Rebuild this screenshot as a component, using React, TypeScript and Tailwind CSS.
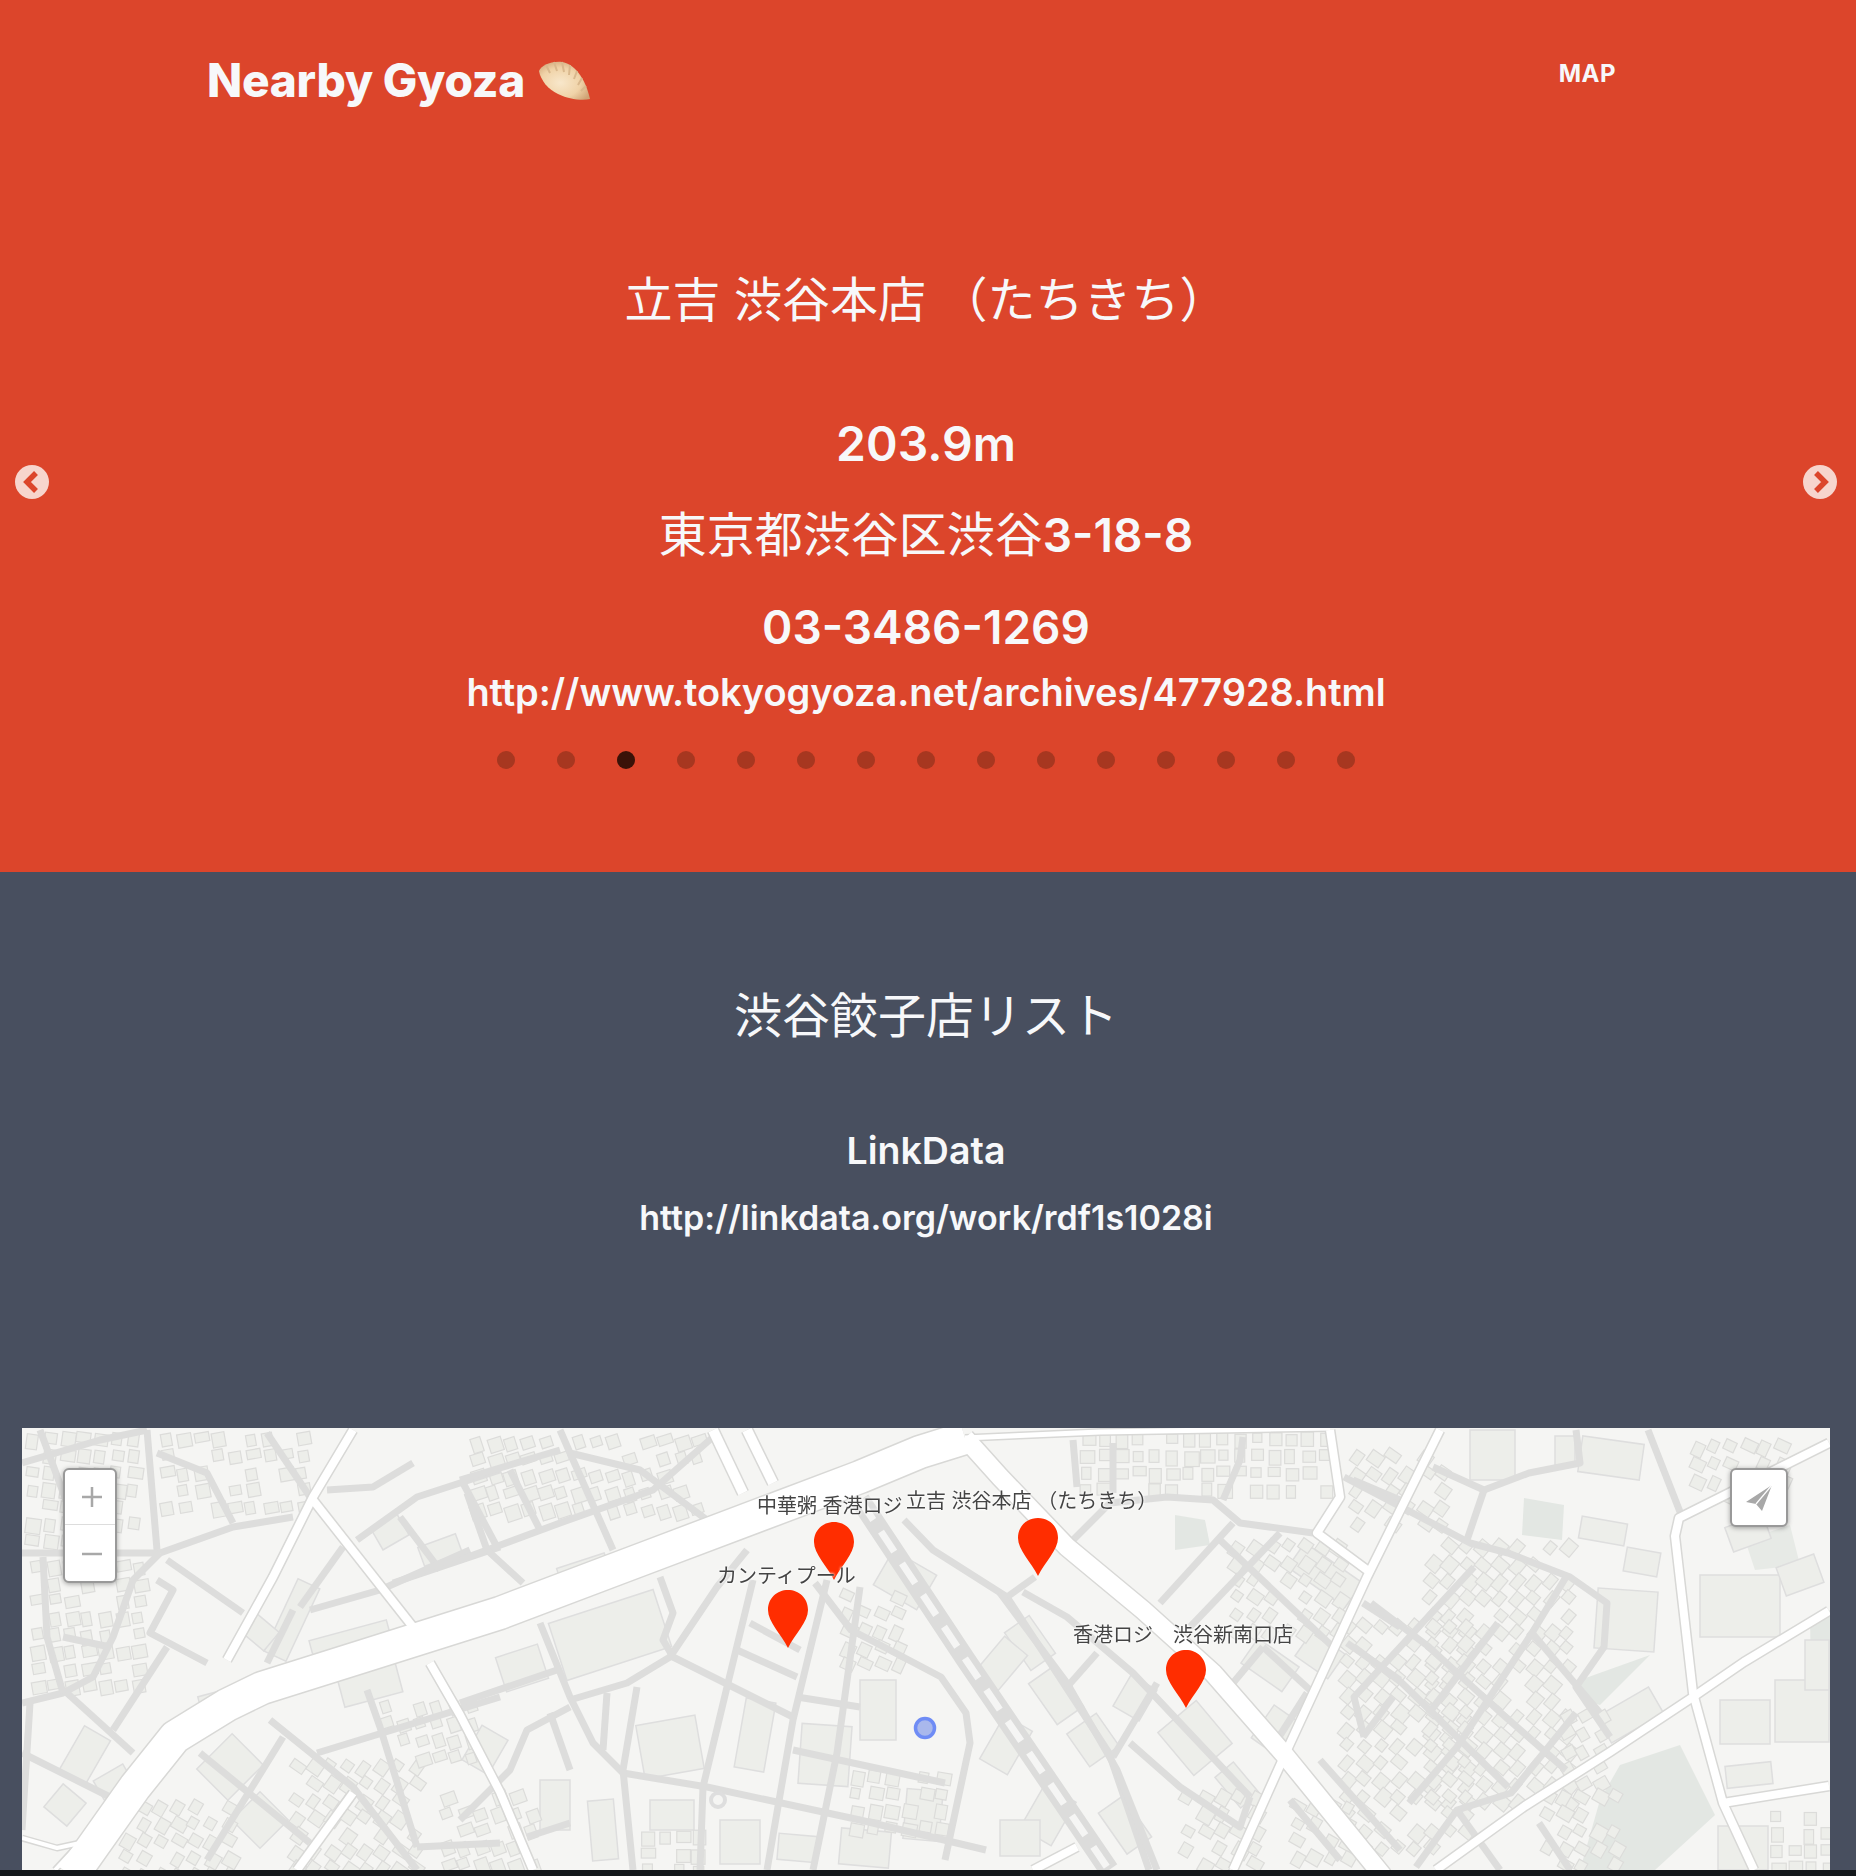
const roadsWhite: [string, number][] = [
  ["M72 1876 L135 1787 L175 1737 L227 1705 L262 1688 L367 1655 L500 1613 L640 1560 L860 1477 L920 1452 L965 1438", 32],
  ["M965 1438 L1100 1432 L1330 1428", 5],
  ["M965 1438 L1000 1477 L1067 1547 L1143 1610 L1213 1673 L1283 1753 L1383 1876", 18],
  ["M353 1430 L313 1497 L273 1577 L227 1660", 8],
  ["M313 1500 L413 1627", 8],
  ["M430 1663 L460 1715 L500 1792 L533 1870", 8],
  ["M353 1793 L297 1870", 8],
  ["M713 1430 L743 1493", 10],
  ["M747 1430 L773 1483", 10],
  ["M22 1838 L57 1848 L80 1843 L55 1870", 4],
  ["M1330 1430 L1340 1497 L1317 1533 L1367 1570", 8],
  ["M1440 1430 L1367 1577 L1287 1750 L1233 1870", 8],
  ["M1033 1870 L1077 1847", 8],
  ["M1829 1443 L1679 1518 L1675 1536 L1693 1693 L1723 1803 L1754 1870", 8],
  ["M1829 1611 L1744 1662 L1693 1697 L1610 1752 L1525 1806 L1436 1870", 8],
  ["M1723 1803 L1829 1786", 8],
];

const roadsGray: string[] = [
  "M22 1463 L100 1440 L147 1430",
  "M40 1430 L67 1503 L80 1550",
  "M147 1430 L157 1550",
  "M157 1453 L207 1473 L233 1523",
  "M267 1433 L310 1497",
  "M160 1553 L233 1527 L293 1517",
  "M22 1553 L160 1553",
  "M327 1490 L373 1487 L413 1463",
  "M357 1540 L417 1497 L500 1470",
  "M400 1517 L440 1570",
  "M393 1583 L500 1547",
  "M463 1483 L497 1547",
  "M160 1553 L133 1580 L113 1637 L93 1677 L63 1693 L22 1703",
  "M43 1557 L47 1637 L63 1693",
  "M157 1580 L173 1590 L150 1633 L207 1663",
  "M167 1560 L243 1613",
  "M293 1610 L267 1663",
  "M310 1610 L380 1590 L470 1550",
  "M343 1547 L300 1607",
  "M63 1637 L110 1647",
  "M167 1647 L113 1730",
  "M67 1693 L133 1753",
  "M22 1753 L110 1797",
  "M30 1703 L22 1830",
  "M270 1720 L353 1787 L417 1870",
  "M317 1753 L500 1697",
  "M283 1737 L207 1860",
  "M200 1753 L310 1843",
  "M367 1690 L380 1727 L417 1847",
  "M417 1847 L500 1843",
  "M460 1480 L560 1450",
  "M560 1430 L570 1453 L640 1470 L707 1520",
  "M570 1453 L613 1550",
  "M510 1470 L540 1530",
  "M460 1560 L560 1523 L653 1490 L713 1437",
  "M467 1493 L487 1550 L523 1583",
  "M540 1623 L570 1697 L593 1743 L623 1773 L707 1787 L860 1820 L986 1850",
  "M460 1703 L557 1670",
  "M570 1700 L627 1683 L670 1657 L717 1587 L747 1550",
  "M660 1577 L673 1613 L663 1640 L673 1657 L793 1717",
  "M753 1580 L727 1687 L703 1787 L700 1870",
  "M827 1580 L793 1720 L767 1870",
  "M750 1623 L800 1650",
  "M737 1650 L797 1677",
  "M797 1697 L860 1707",
  "M793 1750 L945 1783",
  "M860 1587 L837 1753 L813 1870",
  "M550 1713 L570 1770",
  "M637 1687 L623 1770 L633 1870",
  "M607 1693 L603 1750",
  "M570 1707 L527 1730 L510 1770 L460 1820",
  "M527 1837 L570 1823",
  "M815 1583 L851 1630 L884 1647 L941 1677 L966 1713 L970 1743 L945 1860",
  "M904 1520 L933 1550 L1007 1597 L1109 1753 L1149 1870",
  "M1007 1597 L1035 1577",
  "M1023 1592 L1067 1617 L1133 1673 L1250 1797",
  "M1000 1593 L1067 1683 L1117 1770 L1157 1870",
  "M1157 1683 L1113 1757",
  "M1097 1653 L1067 1687",
  "M1130 1743 L1180 1787 L1240 1827 L1250 1797",
  "M1073 1540 L1110 1503 L1167 1497 L1213 1500 L1240 1523 L1313 1533",
  "M1073 1440 L1077 1487",
  "M1113 1443 L1113 1493",
  "M1243 1437 L1240 1460 L1223 1500",
  "M1233 1523 L1160 1603",
  "M1280 1533 L1190 1627",
  "M1220 1540 L1333 1647",
  "M1263 1647 L1310 1690",
  "M1263 1647 L1233 1683",
  "M1307 1693 L1277 1740",
  "M1353 1480 L1400 1500",
  "M1363 1603 L1400 1627",
  "M1347 1643 L1400 1680",
  "M1393 1697 L1363 1737",
  "M1433 1467 L1484 1490 L1529 1473 L1580 1463 L1576 1430",
  "M1484 1490 L1467 1540",
  "M1344 1477 L1470 1543 L1508 1553 L1570 1577 L1607 1603 L1604 1647 L1576 1687 L1610 1737",
  "M1371 1603 L1429 1647 L1501 1713 L1566 1770",
  "M1474 1567 L1354 1697 L1364 1737",
  "M1566 1577 L1532 1633 L1457 1747 L1409 1803",
  "M1498 1623 L1429 1713",
  "M1354 1647 L1402 1683 L1508 1787",
  "M1532 1633 L1600 1713",
  "M1576 1713 L1511 1793 L1457 1810 L1416 1867",
  "M1457 1810 L1500 1870",
  "M1539 1823 L1570 1870",
  "M1648 1430 L1682 1517",
  "M1320 1760 L1400 1850",
  "M1290 1800 L1340 1860",
];

const blocks: [number, number, number, number, number][] = [
  [1470, 1430, 45, 50, 0], [1580, 1440, 62, 36, 8], [1580, 1520, 46, 22, 10], [1625, 1550, 34, 24, 10],
  [1596, 1590, 60, 60, 4], [1700, 1575, 80, 62, 0], [1720, 1700, 50, 44, 0], [1775, 1680, 54, 62, 0],
  [1726, 1764, 46, 22, -6], [1728, 1520, 40, 26, -20], [1780, 1560, 40, 30, -20], [1805, 1640, 24, 50, 0],
  [1555, 1436, 20, 30, 0], [1600, 1700, 60, 30, -30], [1718, 1826, 50, 44, 0],
  [70, 1730, 30, 50, 30], [200, 1690, 50, 24, -15], [100, 1770, 34, 36, -30],
  [205, 1745, 50, 44, -45], [240, 1800, 40, 40, -45], [50, 1790, 30, 30, 40],
  [280, 1580, 24, 80, 25], [310, 1630, 80, 18, -15], [245, 1620, 30, 24, 40],
  [555, 1605, 110, 60, -18], [560, 1560, 50, 30, -18], [500, 1650, 44, 36, -18],
  [640, 1720, 60, 54, -10], [800, 1725, 50, 60, 4],
  [740, 1700, 30, 70, 10], [470, 1730, 30, 40, 30], [540, 1780, 30, 50, 0],
  [590, 1800, 26, 60, -5], [650, 1800, 44, 30, 0], [720, 1820, 40, 44, 0], [778, 1835, 40, 26, 5],
  [840, 1830, 50, 36, 5], [905, 1790, 36, 50, 5], [375, 1520, 30, 24, -30], [420, 1540, 40, 20, -20],
  [1015, 1620, 30, 46, -35], [1040, 1670, 32, 50, -35], [1075, 1720, 36, 40, -35], [1110, 1800, 30, 50, -35],
  [1170, 1710, 50, 56, -40], [1225, 1765, 24, 40, -40], [1120, 1680, 30, 36, 30],
  [1290, 1560, 70, 30, 35], [1245, 1650, 50, 30, 35], [985, 1640, 30, 50, 40], [880, 1560, 50, 40, 30],
  [860, 1680, 36, 60, 0], [990, 1720, 32, 50, 30], [1030, 1790, 36, 50, 30], [1000, 1820, 40, 36, 0],
  [1260, 1710, 30, 40, 35], [1300, 1640, 40, 30, 35], [340, 1670, 60, 30, -15],
];

// small building outlines laid over the dense street blocks
const tinyBuildings = (() => {
  const out: { x: number; y: number; w: number; h: number; r: number }[] = [];
  const zones = [
    [1425, 1540, 1570, 1800, 40], [1340, 1620, 1460, 1850, 40], [25, 1432, 140, 1545, 8],
    [160, 1432, 300, 1510, -10], [30, 1560, 140, 1690, -10], [290, 1760, 420, 1870, 35],
    [470, 1435, 700, 1520, -18], [120, 1800, 230, 1870, 30], [1080, 1432, 1320, 1490, 0],
    [1230, 1540, 1340, 1640, 35], [1350, 1450, 1440, 1530, 35], [1690, 1440, 1780, 1500, 25],
    [440, 1790, 530, 1870, -20], [1560, 1710, 1610, 1780, -30], [840, 1590, 900, 1660, 25],
    [1290, 1800, 1350, 1868, 30], [1770, 1810, 1828, 1868, 0], [1180, 1790, 1260, 1868, 30],
    [1540, 1790, 1610, 1868, 30], [850, 1770, 950, 1830, 10], [640, 1830, 700, 1868, 0],
    [380, 1700, 480, 1760, -18],
  ];
  let seed = 11;
  const rnd = () => {
    seed = (seed * 16807) % 2147483647;
    return seed / 2147483647;
  };
  for (const [x0, y0, x1, y1, r] of zones) {
    for (let y = y0; y < y1; y += 17) {
      for (let x = x0; x < x1; x += 17) {
        if (rnd() < 0.15) continue;
        out.push({ x: x + rnd() * 3, y: y + rnd() * 3, w: 9 + rnd() * 6, h: 9 + rnd() * 6, r });
      }
    }
  }
  return out;
})();

const railway = "M860 1500 L966 1660 L1109 1870";

function Pin({ x, y }: { x: number; y: number }) {
  return (
    <path
      d={`M${x + 20} ${y + 58} C${x + 13} ${y + 44} ${x} ${y + 32} ${x} ${y + 20} C${x} ${y + 8} ${x + 9} ${y} ${x + 20} ${y} C${x + 31} ${y} ${x + 40} ${y + 8} ${x + 40} ${y + 20} C${x + 40} ${y + 32} ${x + 27} ${y + 44} ${x + 20} ${y + 58}Z`}
      fill="#ff2d00"
    />
  );
}

function MapArt() {
  return (
    <svg viewBox="22 1428 1808 442" className="absolute inset-0 h-full w-full blur-[0.6px]">
      <rect x="22" y="1428" width="1808" height="442" fill="#f5f5f3" />
      <polygon points="1524,1498 1564,1505 1562,1540 1522,1535" fill="#e3e7e3" />
      <polygon points="1580,1680 1650,1655 1600,1705 1582,1700" fill="#e3e7e3" />
      <polygon points="1620,1765 1680,1745 1715,1815 1655,1870 1580,1870 1600,1800" fill="#e3e7e3" />
      <polygon points="1745,1540 1790,1525 1800,1565 1755,1570" fill="#e7eae6" />
      <polygon points="1810,1620 1830,1610 1830,1720 1812,1720" fill="#e3e7e3" />
      <polygon points="1175,1515 1205,1520 1210,1545 1175,1550" fill="#e3e7e3" />
      {blocks.map(([x, y, w, h, r], i) => (
        <rect
          key={i}
          x={x}
          y={y}
          width={w}
          height={h}
          fill="#edeeea"
          stroke="#dedede"
          strokeWidth="1.5"
          transform={`rotate(${r} ${x + w / 2} ${y + h / 2})`}
        />
      ))}
      {tinyBuildings.map((b, i) => (
        <rect
          key={i}
          x={b.x}
          y={b.y}
          width={b.w}
          height={b.h}
          fill="#edeeea"
          stroke="#dcdcda"
          strokeWidth="1.2"
          transform={`rotate(${b.r} ${b.x + b.w / 2} ${b.y + b.h / 2})`}
        />
      ))}
      {roadsGray.map((d, i) => (
        <path key={i} d={d} fill="none" stroke="#dddddc" strokeWidth="7" strokeLinejoin="round" />
      ))}
      <path d={railway} fill="none" stroke="#dcdcdb" strokeWidth="20" />
      <path d={railway} fill="none" stroke="#f5f5f4" strokeWidth="7" strokeDasharray="24 14" />
      <circle cx="718" cy="1800" r="7" fill="none" stroke="#dedede" strokeWidth="4" />
      {roadsWhite.map(([d, w], i) => (
        <path key={i} d={d} fill="none" stroke="#d8d8d6" strokeWidth={w + 3} strokeLinejoin="round" />
      ))}
      {roadsWhite.map(([d, w], i) => (
        <path key={i} d={d} fill="none" stroke="#ffffff" strokeWidth={w} strokeLinejoin="round" />
      ))}
      <circle cx="925" cy="1728" r="9.5" fill="#a9b8ec" stroke="#6f8cf5" strokeWidth="3.5" />
      <Pin x={814} y={1522} />
      <Pin x={1018} y={1518} />
      <Pin x={768} y={1590} />
      <Pin x={1166} y={1650} />
    </svg>
  );
}

function MapLabel({ left, top, text }: { left: number; top: number; text: string }) {
  return (
    <span
      className="absolute whitespace-nowrap text-[20px] leading-none text-[#444] [text-shadow:0_0_3px_#fff,0_0_3px_#fff] blur-[0.4px]"
      style={{ left, top }}
    >
      {text}
    </span>
  );
}

function Arrow({ side }: { side: "left" | "right" }) {
  return (
    <svg viewBox="0 0 34 34" className={`absolute top-[465px] h-[34px] w-[34px] ${side === "left" ? "left-[15px]" : "right-[19px]"}`}>
      <circle cx="17" cy="17" r="17" fill="#f7d5cd" />
      <path
        d={side === "left" ? "M21 8 L12 17 L21 26" : "M13 8 L22 17 L13 26"}
        fill="none"
        stroke="#dc452b"
        strokeWidth="5.5"
      />
    </svg>
  );
}

export default function App() {
  return (
    <div className="flex min-h-[1876px] flex-col bg-[#484f5f] text-[#f7f8fa] [font-family:'Inter','Noto_Sans_CJK_JP',sans-serif]">
      <section className="relative h-[872px] bg-[#dc452b] pr-[4px]">
        <header className="flex items-start justify-between pl-[207px] pr-[236px] pt-[50px]">
          <div className="flex items-center text-[46px] font-extrabold leading-[60px] tracking-[-0.25px]">
            Nearby Gyoza
            <svg viewBox="0 0 53 40" className="ml-[13px] mt-[2px] h-[40px] w-[53px]">
              <defs>
                <radialGradient id="gyoza" cx="0.42" cy="0.55" r="0.65">
                  <stop offset="0" stopColor="#f8e7cb" />
                  <stop offset="0.6" stopColor="#f0d3a8" />
                  <stop offset="1" stopColor="#cfa274" />
                </radialGradient>
              </defs>
              <path d="M1 10 C3 5 12 0 24 1 C36 3 47 16 52 38 C44 40 30 38 20 33 C10 28 3 20 1 10Z" fill="url(#gyoza)" />
              <path
                d="M8 4 L12 12 M16 1 L19 10 M24 1 L26 11 M32 4 L31 14 M39 10 L36 18 M44 17 L40 24 M48 25 L43 30"
                stroke="#d9b88d"
                strokeWidth="2"
                fill="none"
              />
            </svg>
          </div>
          <span className="mt-[9px] text-[24px] font-bold leading-[30px] tracking-[0.5px]">MAP</span>
        </header>

        <div className="flex flex-col items-center">
          <h2 className="mt-[160px] text-[48px] font-normal leading-[60px]">立吉 渋谷本店 （たちきち）</h2>
          <p className="mt-[84px] text-[48px] font-semibold leading-[60px]">203.9m</p>
          <p className="mt-[31px] text-[46px] font-semibold leading-[60px]">
            <span className="text-[48px] font-normal">東京都渋谷区渋谷</span>3-18-8
          </p>
          <p className="mt-[32px] text-[46px] font-semibold leading-[60px]">03-3486-1269</p>
          <a className="mt-[10px] text-[38px] font-semibold leading-[50px] tracking-[-0.08px]">http://www.tokyogyoza.net/archives/477928.html</a>
          <div className="mt-[34px] flex gap-[42px]">
            {Array.from({ length: 15 }).map((_, i) => (
              <span
                key={i}
                className={`h-[18px] w-[18px] rounded-full ${i === 2 ? "bg-[#3a1208]" : "bg-[#a73720]"}`}
              />
            ))}
          </div>
        </div>
        <Arrow side="left" />
        <Arrow side="right" />
      </section>

      <section className="flex flex-col items-center pr-[4px]">
        <h2 className="mt-[114px] text-[48px] font-normal leading-[60px]">渋谷餃子店リスト</h2>
        <h3 className="mt-[80px] text-[37.5px] font-semibold leading-[50px]">LinkData</h3>
        <a className="mt-[17px] text-[34px] font-semibold leading-[50px]">http://linkdata.org/work/rdf1s1028i</a>
      </section>

      <div className="relative ml-[22px] mr-[26px] mt-[185px] h-[442px] overflow-hidden bg-[#f5f5f3]">
        <MapArt />
        <MapLabel left={735} top={68} text="中華粥 香港ロジ" />
        <MapLabel left={884} top={63} text="立吉 渋谷本店 （たちきち）" />
        <MapLabel left={695} top={138} text="カンティプール" />
        <MapLabel left={1051} top={197} text="香港ロジ　渋谷新南口店" />

        <div className="absolute left-[41px] top-[40px] flex h-[115px] w-[54px] flex-col rounded-[6px] border-2 border-[#999] bg-white shadow-[0_1px_5px_rgba(0,0,0,0.35)]">
          <div className="flex flex-1 items-center justify-center border-b border-[#ddd] pl-[3px]">
            <svg viewBox="0 0 20 20" className="h-[20px] w-[20px]">
              <path d="M10 0 V20 M0 10 H20" stroke="#a8a8a8" strokeWidth="2.5" />
            </svg>
          </div>
          <div className="flex flex-1 items-center justify-center pl-[3px] pt-[3px]">
            <svg viewBox="0 0 20 20" className="h-[20px] w-[20px]">
              <path d="M0 10 H20" stroke="#a8a8a8" strokeWidth="2.5" />
            </svg>
          </div>
        </div>
        <div className="absolute right-[42px] top-[40px] flex h-[59px] w-[58px] items-center justify-center rounded-[6px] border-2 border-[#999] bg-white shadow-[0_1px_5px_rgba(0,0,0,0.35)]">
          <svg viewBox="0 0 28 28" className="h-[28px] w-[28px]">
            <path d="M27 1 L1 18 L11 20 L17 27Z" fill="#a8a8a8" />
            <path d="M27 1 L11 20" stroke="#fff" strokeWidth="1.2" />
          </svg>
        </div>
      </div>
      <div className="h-[6px] bg-[#14181c]" />
    </div>
  );
}
